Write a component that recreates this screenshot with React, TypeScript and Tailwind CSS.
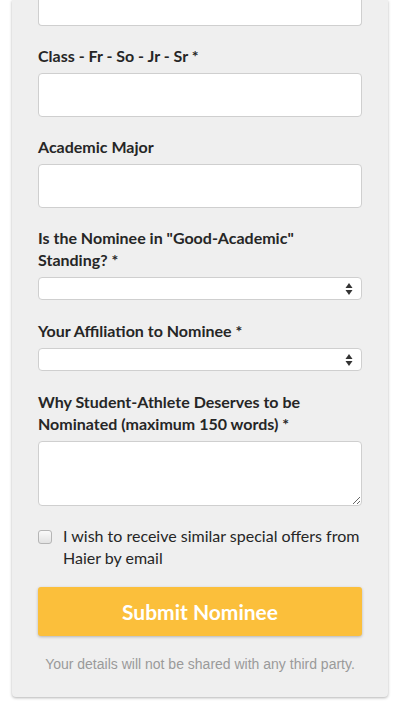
import React from 'react';

const labelCls = "block text-[16px] leading-[22px] font-bold text-[#262626] mb-[6px]";
const inputCls = "block w-full bg-white border border-[#cfcfcf] rounded-[4px] outline-none";

const SelectArrows = () => (
    <svg className="absolute right-[9px] top-1/2 -translate-y-1/2 pointer-events-none" width="8" height="13" viewBox="0 0 8 13">
        <path d="M4 0.5 L7.5 5.5 L0.5 5.5 Z" fill="#333" />
        <path d="M4 12.5 L7.5 7.5 L0.5 7.5 Z" fill="#333" />
    </svg>
);

const SelectField = () => (
    <div className="relative">
        <select className={`${inputCls} h-[23px] appearance-none text-[13px] px-2`} defaultValue="">
            <option value=""></option>
        </select>
        <SelectArrows />
    </div>
);

export default function App() {
    return (
        <div className="min-h-[711px] bg-white" style={{ fontFamily: 'Lato, "Liberation Sans", sans-serif' }}>
            <div className="mx-[12px] w-[376px] bg-[#efefef] rounded-b-[4px] shadow-[0_1px_3px_rgba(0,0,0,0.3)] px-[26px] pb-[24px]">
                {/* tail of the field above, scrolled off the top */}
                <div className="h-[26px] bg-white border border-t-0 border-[#cfcfcf] rounded-b-[4px]" />

                <div className="mt-[19px]">
                    <label className={labelCls}>Class - Fr - So - Jr - Sr *</label>
                    <input type="text" className={`${inputCls} h-[44px] px-3`} />
                </div>

                <div className="mt-[19px]">
                    <label className={labelCls}>Academic Major</label>
                    <input type="text" className={`${inputCls} h-[44px] px-3`} />
                </div>

                <div className="mt-[19px]">
                    <label className={labelCls}>Is the Nominee in "Good-Academic" Standing? *</label>
                    <SelectField />
                </div>

                <div className="mt-[20px]">
                    <label className={labelCls}>Your Affiliation to Nominee *</label>
                    <SelectField />
                </div>

                <div className="mt-[20px]">
                    <label className={labelCls}>Why Student-Athlete Deserves to be Nominated (maximum 150 words) *</label>
                    <textarea className={`${inputCls} h-[65px] px-3 py-2 resize-y`} />
                </div>

                <label className="mt-[19px] flex items-start gap-[11px] text-[16px] leading-[22px] text-[#262626]">
                    <input
                        type="checkbox"
                        className="appearance-none mt-[5px] shrink-0 w-[14px] h-[14px] rounded-[3px] border border-[#b5b5b5] bg-gradient-to-b from-[#fafafa] to-[#e2e2e2]"
                    />
                    <span>I wish to receive similar special offers from Haier by email</span>
                </label>

                <button className="mt-[18px] w-full h-[49px] rounded-[3px] bg-[#fbbf3b] text-white text-[21px] font-bold shadow-[0_1px_3px_rgba(0,0,0,0.25)]">
                    Submit Nominee
                </button>

                <p className="mt-[19px] text-center text-[14px] leading-[18px] text-[#9a9a9a]" style={{ fontFamily: '"Liberation Sans", Arial, sans-serif' }}>
                    Your details will not be shared with any third party.
                </p>
            </div>
        </div>
    );
}
